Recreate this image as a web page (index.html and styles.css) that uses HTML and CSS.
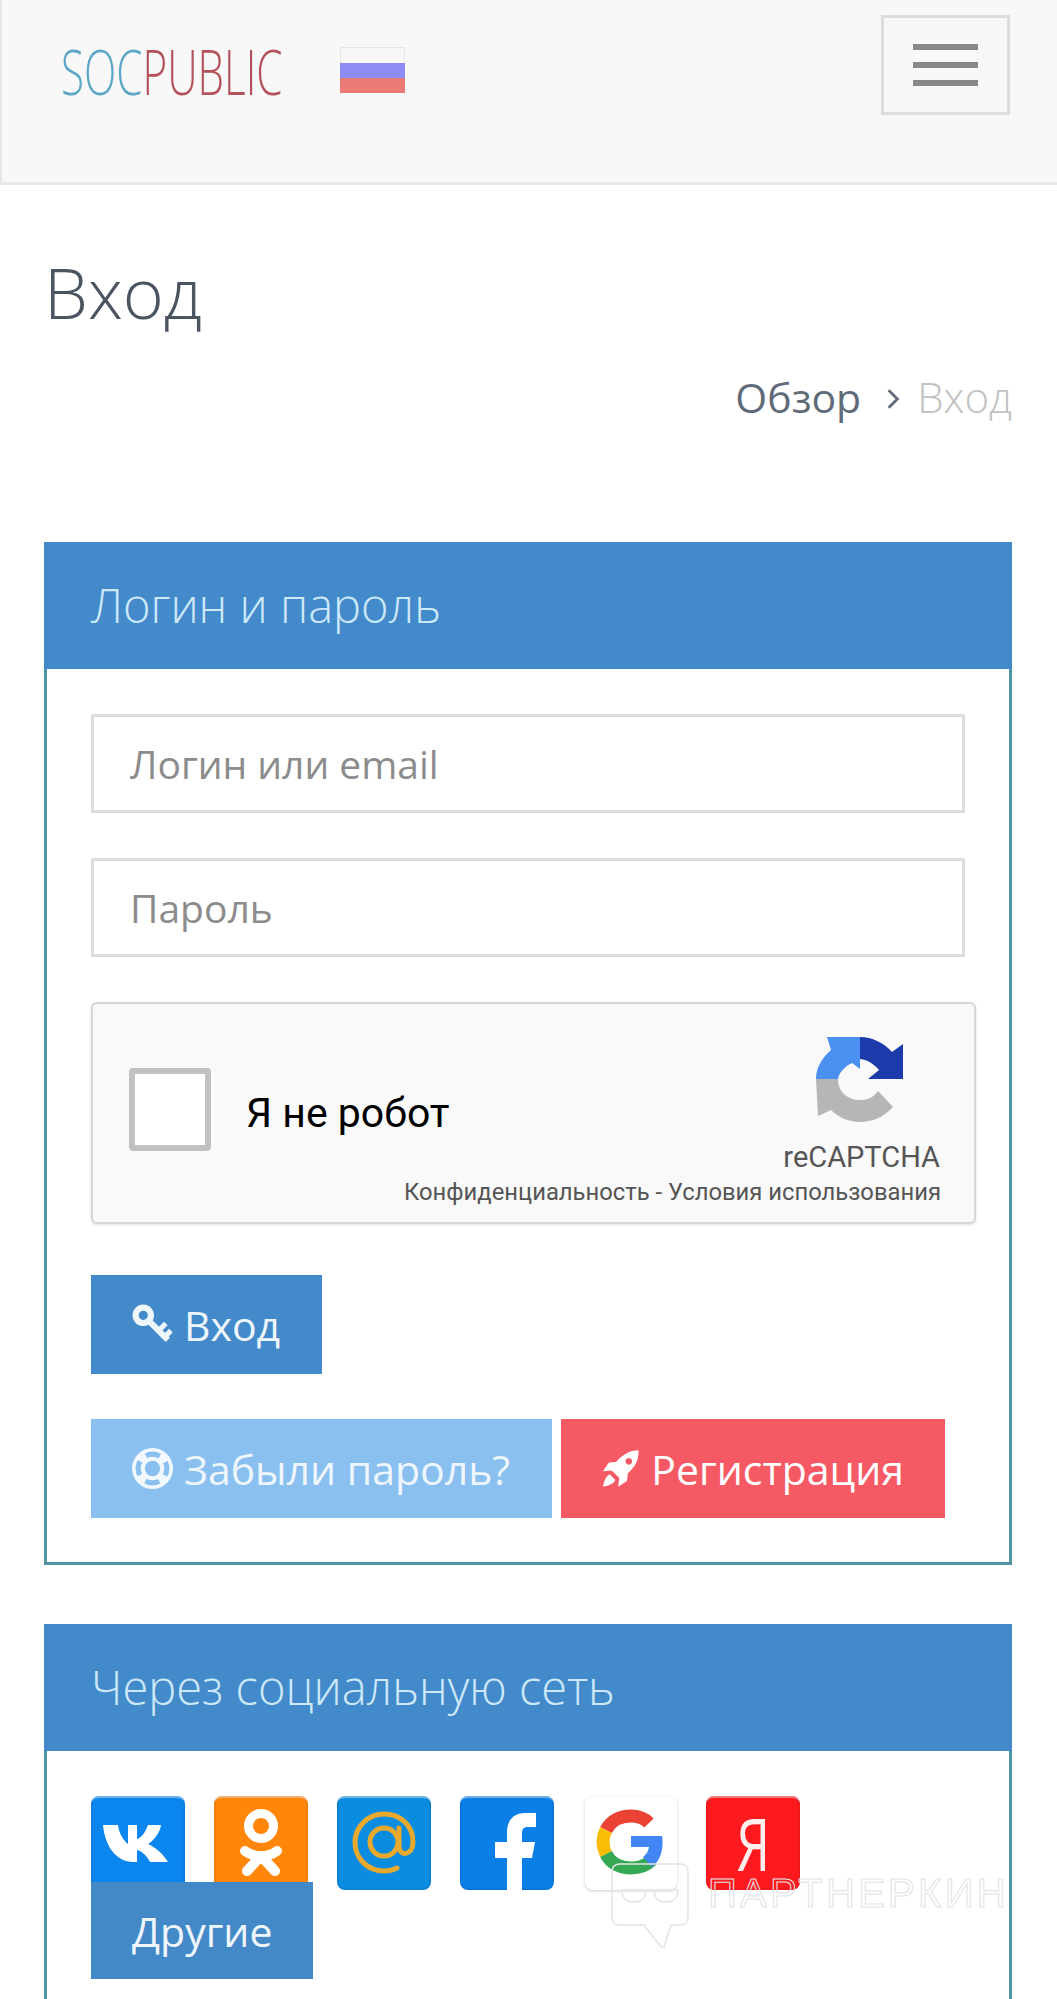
FILE: index.html
```html
<!DOCTYPE html>
<html lang="ru">
<head>
    <meta charset="UTF-8">
    <meta name="viewport" content="width=device-width, initial-scale=1.0">
    <title>Вход</title>
    <link rel="stylesheet" href="styles.css">
</head>
<body>

    <nav class="navbar">
        <a class="logo"><span class="logo-text"><span class="logo-soc">SOC</span><span class="logo-public">PUBLIC</span></span></a>
        <div class="flag"><i class="flag-white"></i><i class="flag-blue"></i><i class="flag-red"></i></div>
        <button class="burger"><i></i><i></i><i></i></button>
    </nav>

    <h1 class="page-title">Вход</h1>
    <div class="breadcrumb">
        <span class="crumb-link">Обзор</span>
        <svg class="crumb-sep" viewBox="0 0 12 20"><path d="M2 2l8 8-8 8" fill="none" stroke="#5f6b78" stroke-width="2.500"/></svg>
        <span class="crumb-current">Вход</span>
    </div>

    <section class="panel panel-login">
        <div class="panel-heading">Логин и пароль</div>
        <div class="panel-body">
            <input class="field" type="text" placeholder="Логин или email">
            <input class="field" type="password" placeholder="Пароль">

            <div class="captcha">
                <div class="captcha-check"></div>
                <div class="captcha-label">Я не робот</div>
                <div class="captcha-brand">
                    <svg class="captcha-logo" viewBox="0 0 87 85">
                        <path fill="#4a90f0" d="M0 42C0 29 8 19 15 13L11 0H44V32L36 26C28 30 23 36 22 42Z"/>
                        <path fill="#1c3aa9" d="M44 0C56 0 68 6 76 15L87 7V42H52L63 33C58 27 52 23 44 22Z"/>
                        <path fill="#b6b6b6" d="M0 42H22C22 55 32 63 44 63C52 63 58 60 62 54L77 70C68 80 56 85 44 85C32 85 22 80 15 73L2 79Z"/>
                    </svg>
                    <div class="captcha-name">reCAPTCHA</div>
                    <div class="captcha-links">Конфиденциальность - Условия использования</div>
                </div>
            </div>

            <a class="btn btn-primary btn-login">
                <svg class="btn-icon" viewBox="0 0 40 40"><g fill="none" stroke="#eef6fc">
                    <circle cx="11" cy="11" r="7.500" stroke-width="6"/>
                    <path d="M16 16 35 35" stroke-width="6"/>
                    <path d="M26 26 33 19M32 32 38 26" stroke-width="5"/>
                </g></svg>
                Вход
            </a>

            <div class="btn-row">
                <a class="btn btn-light">
                    <svg class="btn-icon" viewBox="0 0 40 40">
                        <circle cx="20" cy="20" r="20" fill="#f1f8fe"/>
                        <circle cx="20" cy="20" r="14" fill="none" stroke="#89c0f0" stroke-width="5" stroke-dasharray="14 8" stroke-dashoffset="7"/>
                        <circle cx="20" cy="20" r="7.500" fill="#89c0f0"/>
                    </svg>
                    Забыли пароль?
                </a>
                <a class="btn btn-danger">
                    <svg class="btn-icon" viewBox="0 0 40 40">
                        <path fill="#fff" fill-rule="evenodd" d="M38 1C29 1 21 6 15 13L7 14 1 23 10 22 18 30 17 39 26 33 27 25C34 19 39 11 38 1ZM28 9a3.500 3.500 0 1 0 .01 0Z"/>
                        <path fill="#fff" d="M8 26C3 29 2 35 1 39 6 38 11 37 14 32Z"/>
                    </svg>
                    Регистрация
                </a>
            </div>
        </div>
    </section>

    <section class="panel panel-social">
        <div class="panel-heading">Через социальную сеть</div>
        <div class="panel-body">
            <div class="social-row">
                <a class="social social-vk">
                    <svg viewBox="0 0 94 94"><path fill="#fff" d="M12 29H27C28 38 33 45 37 48V29H46V43C50 42 54 37 57 29H70C69 37 62 45 57 48 62 50 71 56 77 66H59C56 60 51 55 46 54V66H42C26 66 14 51 12 29Z"/></svg>
                </a>
                <a class="social social-ok">
                    <svg viewBox="0 0 94 94"><g fill="none" stroke="#fff" stroke-linecap="round">
                        <circle cx="47" cy="30" r="12.500" stroke-width="9"/>
                        <path d="M31 55C41 62 53 62 63 55M47 60 33 75M47 60 61 75" stroke-width="10"/>
                    </g></svg>
                </a>
                <a class="social social-mail">
                    <svg viewBox="0 0 94 94"><g fill="none" stroke="#e9a92c" stroke-width="5" stroke-linecap="round">
                        <circle cx="47" cy="46" r="14"/>
                        <path d="M62 32V50C62 61 76 60 76 46 76 29 63 18 47 18 31 18 18 31 18 46 18 63 31 75 47 75 52 75 56 74 60 72"/>
                    </g></svg>
                </a>
                <a class="social social-fb">
                    <svg viewBox="0 0 94 94"><path fill="#fff" d="M47 94V62H35V46H47V36C47 24 54 17 65 17H76V31H68C63 31 62 33 62 38V46H75L72 62H62V94Z"/></svg>
                </a>
                <a class="social social-google">
                    <svg viewBox="0 0 94 94">
                        <g fill="none" stroke-width="13">
                            <path stroke="#ea4335" d="M21 34C26 24 36 20 46 20 53 20 60 23 64 27"/>
                            <path stroke="#fbbc05" d="M21 34C17 42 17 50 21 58"/>
                            <path stroke="#34a853" d="M21 58C26 68 36 72 46 72 55 72 62 69 67 64"/>
                        </g>
                        <path fill="#4285f4" d="M46 40H77C79 52 76 64 67 71L58 61C62 58 63 55 64 51H46Z"/>
                    </svg>
                </a>
                <a class="social social-ya"><span class="ya-letter">Я</span></a>
            </div>
            <a class="btn btn-primary btn-other">Другие</a>
        </div>
    </section>

    <!-- watermark on top of the page -->
    <div class="watermark">
        <svg class="watermark-mark" viewBox="0 0 78 86"><g fill="none" stroke="#e4e4e4" stroke-width="1.500">
            <path d="M9 1H69C74 1 77 4 77 9V55C77 59 74 62 69 62H60L53 84H50L33 62H9C4 62 1 59 1 55V9C1 4 4 1 9 1Z"/>
            <path d="M11 27H35C35 36 29 39 23 39 17 39 11 36 11 27ZM43 27H67C67 36 61 39 55 39 49 39 43 36 43 27ZM35 27H43"/>
        </g></svg>
        <span class="watermark-text">ПАРТНЕРКИН</span>
    </div>

</body>
</html>
```

FILE: styles.css
```css
html, body {
    margin: 0;
    background-color: #fff;
}

body {
    font-family: "Open Sans", Arial, sans-serif;
    position: relative;
    height: 1999px;
    overflow: hidden;
}

/* navbar */
.navbar {
    box-sizing: border-box;
    height: 185px;
    background-color: #f8f8f8;
    border-left: 2px solid #e7e7e7;
    border-bottom: 3px solid #e7e7e7;
    display: flex;
    align-items: flex-start;
    padding: 15px 47px 0 59px;
}

.logo {
    width: 221px;
    margin-top: 26px;
    line-height: 60px;
}

.logo-text {
    display: inline-block;
    font-size: 63px;
    font-weight: 300;
    white-space: nowrap;
    transform: scaleX(0.67);
    transform-origin: left center;
}

.logo-soc {
    color: #5da6c6;
}

.logo-public {
    color: #b4525b;
}

.flag {
    width: 65px;
    height: 46px;
    margin: 32px 0 0 58px;
    display: flex;
    flex-direction: column;
}

.flag i {
    flex: 1;
}

.flag-white {
    background-color: #f7f7f7;
    border: 1px solid #e6e6e6;
    border-bottom: none;
}

.flag-blue {
    background-color: #8c8cf4;
}

.flag-red {
    background-color: #ec7b77;
}

.burger {
    box-sizing: border-box;
    width: 129px;
    height: 100px;
    margin-left: auto;
    background: transparent;
    border: 3px solid #ddd;
    padding: 26px 29px;
    display: flex;
    flex-direction: column;
    gap: 12px;
}

.burger i {
    display: block;
    height: 6px;
    width: 65px;
    background-color: #888;
}

/* page title */
.page-title {
    margin: 60px 0 0 44px;
    font-size: 70px;
    line-height: 95px;
    font-weight: 300;
    color: #4a5561;
}

.breadcrumb {
    margin-top: 30px;
    padding-right: 45px;
    display: flex;
    justify-content: flex-end;
    align-items: center;
    font-size: 41px;
    line-height: 54px;
    font-weight: 300;
}

.crumb-link {
    color: #5f6b78;
    font-weight: 400;
}

.crumb-sep {
    width: 14px;
    height: 22px;
    margin: 4px 17px 0 25px;
}

.crumb-current {
    font-size: 42px;
    color: #c2c2c2;
}

/* panels */
.panel {
    box-sizing: border-box;
    width: 968px;
    margin-left: 44px;
    border: 3px solid #4e94a5;
    border-top: none;
}

.panel-login {
    margin-top: 118px;
}

.panel-social {
    margin-top: 59px;
    border-bottom: none;
}

.panel-heading {
    height: 127px;
    margin: 0 -3px;
    padding-left: 47px;
    background-color: #428aca;
    color: #cde8f9;
    font-size: 47px;
    font-weight: 300;
    line-height: 127px;
}

.panel-body {
    padding: 45px 44px 44px 44px;
}

.panel-social .panel-body {
    padding-bottom: 30px;
}

.field {
    display: block;
    box-sizing: border-box;
    width: 874px;
    height: 99px;
    margin-bottom: 45px;
    padding: 0 36px;
    border: 3px solid #ddd;
    background-color: #fff;
    font-family: inherit;
    font-size: 39px;
}

.field::placeholder {
    color: #8c8c8c;
    opacity: 1;
}

/* captcha */
.captcha {
    box-sizing: border-box;
    width: 885px;
    height: 222px;
    display: flex;
    position: relative;
    background-color: #f9f9f9;
    border: 2px solid #d6d6d6;
    border-radius: 6px;
    box-shadow: 0 1px 3px rgba(0, 0, 0, 0.12);
    font-family: Roboto, Arial, sans-serif;
}

.captcha-check {
    box-sizing: border-box;
    width: 82px;
    height: 83px;
    margin: 64px 0 0 36px;
    background-color: #fff;
    border: 6px solid #c1c1c1;
    border-radius: 4px;
}

.captcha-label {
    margin: 84px 0 0 35px;
    font-size: 41px;
    line-height: 50px;
    color: #000;
}

.captcha-brand {
    margin-left: auto;
    padding: 33px 34px 0 0;
    display: flex;
    flex-direction: column;
    align-items: flex-end;
    color: #555;
}

.captcha-logo {
    width: 87px;
    height: 85px;
    margin-right: 37px;
}

.captcha-name {
    margin-top: 18px;
    font-size: 29px;
    line-height: 34px;
}

.captcha-links {
    position: absolute;
    right: 33px;
    bottom: 15px;
    font-size: 23.800px;
    line-height: 30px;
    white-space: nowrap;
}

/* buttons */
.btn {
    box-sizing: border-box;
    height: 99px;
    display: inline-flex;
    align-items: center;
    padding: 0 41px;
    color: #eef6fc;
    font-size: 41px;
    white-space: nowrap;
}

.btn-icon {
    width: 41px;
    height: 41px;
    margin-right: 11px;
}

.btn-primary {
    background-color: #428aca;
}

.btn-login {
    margin-top: 51px;
    display: flex;
    width: 231px;
}

.btn-row {
    display: flex;
    gap: 9px;
    margin-top: 45px;
}

.btn-light {
    width: 461px;
    background-color: #89c0f0;
}

.btn-danger {
    width: 384px;
    background-color: #f55a64;
    color: #fff;
}

/* social */
.social-row {
    display: flex;
    gap: 29px;
}

.social {
    box-sizing: border-box;
    width: 94px;
    height: 94px;
    border-radius: 8px;
    overflow: hidden;
    display: block;
    box-shadow: inset 0 0 0 2px rgba(0, 0, 0, 0.06), inset 0 4px 0 -2px rgba(255, 255, 255, 0.45);
}

.social svg {
    display: block;
    width: 94px;
    height: 94px;
}

.social-vk {
    background-color: #0a86ee;
}

.social-ok {
    background-color: #ff8608;
}

.social-mail {
    background-color: #0a8ce0;
}

.social-fb {
    background-color: #0a7fe8;
}

.social-google {
    width: 92px;
    margin-left: 2px;
    background-color: #fff;
    box-shadow: 0 1px 3px rgba(0, 0, 0, 0.2);
}

.social-ya {
    background-color: #fd1a1f;
    display: flex;
    justify-content: center;
    align-items: center;
    overflow: visible;
}

.ya-letter {
    color: #fdeeee;
    font-size: 74px;
    line-height: 60px;
    transform: scaleX(0.72);
}

.btn-other {
    display: flex;
    width: 222px;
    height: 97px;
    margin-top: -8px;
    position: relative;
    background-color: #4489c7;
}

/* watermark */
.watermark {
    position: absolute;
    left: 611px;
    top: 1863px;
    display: flex;
    align-items: flex-start;
    pointer-events: none;
}

.watermark-mark {
    width: 78px;
    height: 86px;
}

.watermark-text {
    margin: 15px 0 0 19px;
    font-family: "Liberation Sans", Arial, sans-serif;
    font-size: 40px;
    line-height: 30px;
    letter-spacing: 3.300px;
    color: transparent;
    -webkit-text-stroke: 1px #e2e2e2;
    white-space: nowrap;
}
```
